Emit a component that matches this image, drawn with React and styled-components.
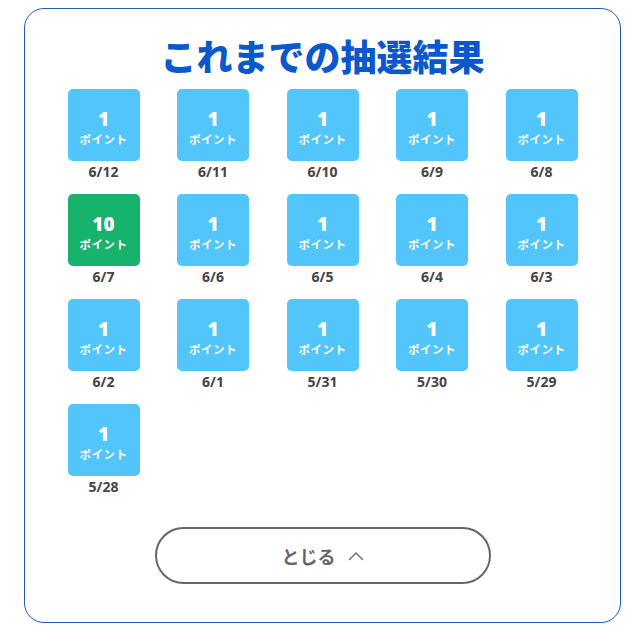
import React from 'react';
import styled, { createGlobalStyle } from 'styled-components';

const GlobalStyle = createGlobalStyle`
  body {
    margin: 0;
    background: #fff;
    font-family: 'Noto Sans CJK JP', 'Noto Sans', sans-serif;
  }
`;

const Page = styled.div`
  padding: 8px 14px 20px 24px;
`;

const Card = styled.section`
  box-sizing: border-box;
  width: 597px;
  height: 615px;
  border: 1px solid #2159b5;
  border-radius: 20px;
  padding: 26px 0 0;
  display: flex;
  flex-direction: column;
  align-items: center;
`;

const Title = styled.h2`
  margin: 0;
  font-size: 36px;
  line-height: 40px;
  font-weight: 900;
  color: #0a58cc;
`;

const Grid = styled.div`
  display: grid;
  grid-template-columns: repeat(5, 72px);
  column-gap: 37.5px;
  row-gap: 13px;
  margin-top: 14px;
`;

const Item = styled.div`
  display: flex;
  flex-direction: column;
  align-items: center;
`;

const Tile = styled.div`
  width: 72px;
  height: 72px;
  border-radius: 5px;
  background: ${(p) => (p.$big ? '#17b26b' : '#52c5fb')};
  color: #fff;
  display: flex;
  flex-direction: column;
  align-items: center;
  justify-content: center;
  padding-top: 3px;
  box-sizing: border-box;
`;

const Points = styled.span`
  font-family: 'Noto Sans', 'Noto Sans CJK JP', sans-serif;
  font-size: 19px;
  line-height: 24px;
  font-weight: 900;
`;

const Unit = styled.span`
  font-size: 11.5px;
  line-height: 16px;
  font-weight: 700;
  letter-spacing: 0.5px;
`;

const DateLabel = styled.span`
  margin-top: 2px;
  font-family: 'Noto Sans', sans-serif;
  font-size: 14px;
  line-height: 18px;
  font-weight: 700;
  color: #444;
`;

const CloseButton = styled.button`
  box-sizing: border-box;
  margin-top: 31px;
  width: 336px;
  height: 57px;
  border: 2px solid #666;
  border-radius: 29px;
  background: #fff;
  color: #666;
  font-family: 'Noto Sans CJK JP', sans-serif;
  font-size: 18px;
  font-weight: 700;
  display: flex;
  align-items: center;
  justify-content: center;
  gap: 12px;
  cursor: pointer;
`;

const results = [
  { date: '6/12', points: 1 },
  { date: '6/11', points: 1 },
  { date: '6/10', points: 1 },
  { date: '6/9', points: 1 },
  { date: '6/8', points: 1 },
  { date: '6/7', points: 10 },
  { date: '6/6', points: 1 },
  { date: '6/5', points: 1 },
  { date: '6/4', points: 1 },
  { date: '6/3', points: 1 },
  { date: '6/2', points: 1 },
  { date: '6/1', points: 1 },
  { date: '5/31', points: 1 },
  { date: '5/30', points: 1 },
  { date: '5/29', points: 1 },
  { date: '5/28', points: 1 }
];

const ChevronUp = () => (
  <svg width="16" height="10" viewBox="0 0 16 10" fill="none">
    <path d="M1.5 8.5 L8 2 L14.5 8.5" stroke="#777" strokeWidth="1.6" strokeLinecap="round" strokeLinejoin="round" />
  </svg>
);

export default function App() {
  return (
    <>
      <GlobalStyle />
      <Page>
        <Card>
          <Title>これまでの抽選結果</Title>
          <Grid>
            {results.map((r) => (
              <Item key={r.date}>
                <Tile $big={r.points > 1}>
                  <Points>{r.points}</Points>
                  <Unit>ポイント</Unit>
                </Tile>
                <DateLabel>{r.date}</DateLabel>
              </Item>
            ))}
          </Grid>
          <CloseButton>
            とじる
            <ChevronUp />
          </CloseButton>
        </Card>
      </Page>
    </>
  );
}
